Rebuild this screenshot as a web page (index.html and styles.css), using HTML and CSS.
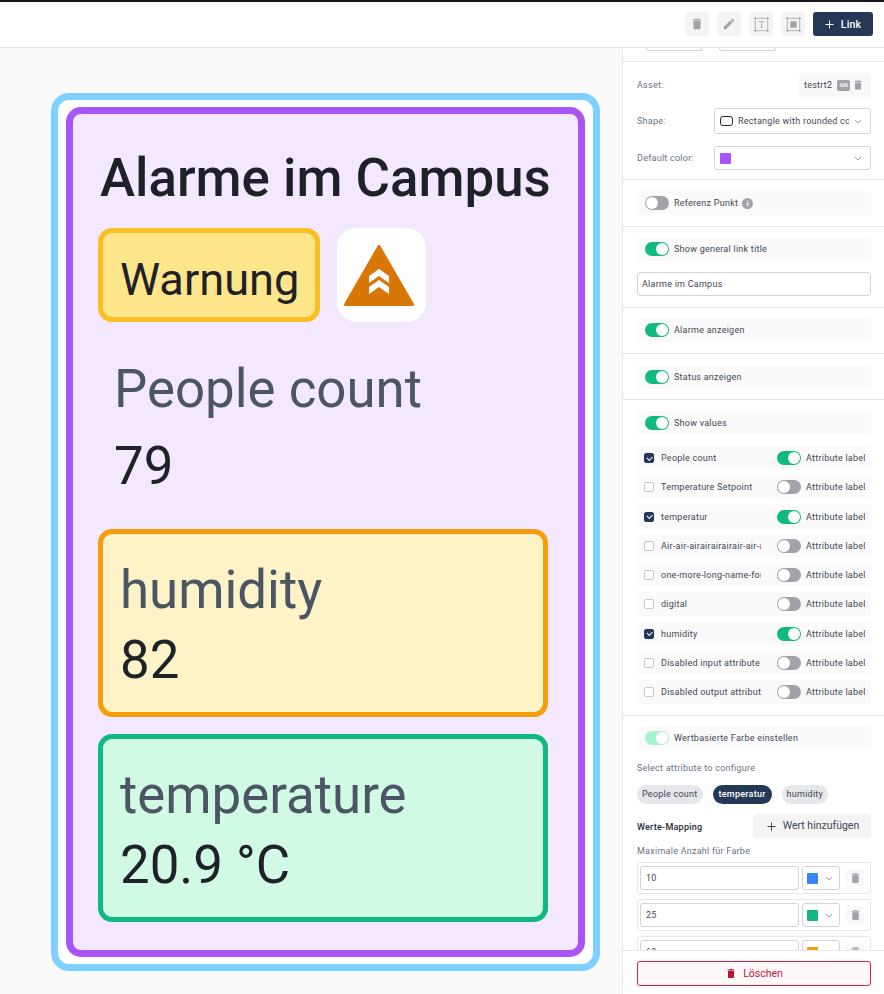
FILE: index.html
```html
<!DOCTYPE html>
<html lang="de">
<head>
<meta charset="utf-8">
<title>Link editor</title>
<link rel="stylesheet" href="styles.css">
</head>
<body>
<svg class="defs" width="0" height="0" aria-hidden="true">
  <symbol id="i-trash" viewBox="0 0 24 24"><path d="M6 19c0 1.1.9 2 2 2h8c1.1 0 2-.9 2-2V7H6v12zM19 4h-3.5l-1-1h-5l-1 1H5v2h14V4z"/></symbol>
  <symbol id="i-edit" viewBox="0 0 24 24"><path d="M3 17.25V21h3.75L17.81 9.94l-3.75-3.75L3 17.25zM20.71 7.04c.39-.39.39-1.02 0-1.41l-2.34-2.34c-.39-.39-1.02-.39-1.41 0l-1.83 1.83 3.75 3.75 1.83-1.83z"/></symbol>
  <symbol id="i-chev" viewBox="0 0 10 6"><path d="M1 1l4 4 4-4" fill="none" stroke="currentColor" stroke-width="1"/></symbol>
  <symbol id="i-plus" viewBox="0 0 10 10"><path d="M5 .5v9M.5 5h9" fill="none" stroke="currentColor" stroke-width="1.1"/></symbol>
</svg>
<div class="app">
  <header class="topbar">
    <button class="tool"><svg class="tool-ic"><use href="#i-trash"/></svg></button>
    <button class="tool"><svg class="tool-ic"><use href="#i-edit"/></svg></button>
    <button class="tool">
      <svg class="frame" viewBox="0 0 14 14"><rect x="1.2" y="1.2" width="11.6" height="11.6"/><circle cx="1.2" cy="1.2" r=".9"/><circle cx="12.8" cy="1.2" r=".9"/><circle cx="1.2" cy="12.8" r=".9"/><circle cx="12.8" cy="12.8" r=".9"/><path d="M4.3 4.3h5.4M7 4.3v5.4M5.8 9.7h2.4"/></svg>
    </button>
    <button class="tool">
      <svg class="frame" viewBox="0 0 14 14"><rect x="1.2" y="1.2" width="11.6" height="11.6"/><circle cx="1.2" cy="1.2" r=".9"/><circle cx="12.8" cy="1.2" r=".9"/><circle cx="1.2" cy="12.8" r=".9"/><circle cx="12.8" cy="12.8" r=".9"/><rect class="frame-fill" x="4" y="4" width="6" height="6"/></svg>
    </button>
    <button class="link-btn"><svg class="plus"><use href="#i-plus"/></svg><span>Link</span></button>
  </header>
  <div class="workspace">
    <main class="canvas">
      <div class="outer">
        <div class="inner">
          <h1 class="title">Alarme im Campus</h1>
          <div class="status-row">
            <div class="badge">Warnung</div>
            <div class="alarm-ic">
              <svg class="alarm-svg" viewBox="0 0 70 61">
                <path class="tri" d="M35 1.5 L68.5 59.5 H1.5 Z"/>
                <path class="chev" d="M25 31 L35 24 L45 31 V38 L35 31 L25 38 Z"/>
                <path class="chev" d="M25 42 L35 35 L45 42 V49 L35 42 L25 49 Z"/>
              </svg>
            </div>
          </div>
          <div class="plain">
            <div class="label">People count</div>
            <div class="value">79</div>
          </div>
          <div class="card card-amber">
            <div class="label">humidity</div>
            <div class="value">82</div>
          </div>
          <div class="card card-green">
            <div class="label">temperature</div>
            <div class="value">20.9 °C</div>
          </div>
        </div>
      </div>
    </main>
    <aside class="panel">
      <div class="panel-scroll">
        <section class="sec sec-stub"><span class="stub"></span><span class="stub"></span></section>
        <section class="sec sec-form">
          <div class="form-row form-asset">
            <span class="form-label">Asset:</span>
            <span class="asset"><span>testrt2</span><span class="asset-tag">GAI</span><svg class="asset-trash"><use href="#i-trash"/></svg></span>
          </div>
          <div class="form-row form-shape">
            <span class="form-label">Shape:</span>
            <span class="select select-shape"><i class="shape-ic"></i><span class="select-text">Rectangle with rounded corners</span><svg class="chev-ic"><use href="#i-chev"/></svg></span>
          </div>
          <div class="form-row form-color">
            <span class="form-label">Default color:</span>
            <span class="select select-color"><i class="swatch sw-purple"></i><svg class="chev-ic push"><use href="#i-chev"/></svg></span>
          </div>
        </section>
        <section class="sec sec-roomy">
          <div class="row"><i class="toggle"></i><span>Referenz Punkt</span><i class="info">i</i></div>
        </section>
        <section class="sec sec-tight">
          <div class="row"><i class="toggle on"></i><span>Show general link title</span></div>
          <div class="text-input">Alarme im Campus</div>
        </section>
        <section class="sec sec-tight">
          <div class="row"><i class="toggle on"></i><span>Alarme anzeigen</span></div>
        </section>
        <section class="sec">
          <div class="row"><i class="toggle on"></i><span>Status anzeigen</span></div>
        </section>
        <section class="sec sec-roomy">
          <div class="row"><i class="toggle on"></i><span>Show values</span></div>
          <div class="attrs">
            <div class="attr"><i class="check on"></i><span class="attr-name">People count</span><i class="toggle on"></i><span class="attr-label">Attribute label</span></div>
            <div class="attr"><i class="check"></i><span class="attr-name">Temperature Setpoint</span><i class="toggle"></i><span class="attr-label">Attribute label</span></div>
            <div class="attr"><i class="check on"></i><span class="attr-name">temperatur</span><i class="toggle on"></i><span class="attr-label">Attribute label</span></div>
            <div class="attr"><i class="check"></i><span class="attr-name">Air-air-airairairairair-air-air</span><i class="toggle"></i><span class="attr-label">Attribute label</span></div>
            <div class="attr"><i class="check"></i><span class="attr-name">one-more-long-name-for-test</span><i class="toggle"></i><span class="attr-label">Attribute label</span></div>
            <div class="attr"><i class="check"></i><span class="attr-name">digital</span><i class="toggle"></i><span class="attr-label">Attribute label</span></div>
            <div class="attr"><i class="check on"></i><span class="attr-name">humidity</span><i class="toggle on"></i><span class="attr-label">Attribute label</span></div>
            <div class="attr"><i class="check"></i><span class="attr-name">Disabled input attribute</span><i class="toggle"></i><span class="attr-label">Attribute label</span></div>
            <div class="attr"><i class="check"></i><span class="attr-name">Disabled output attribute</span><i class="toggle"></i><span class="attr-label">Attribute label</span></div>
          </div>
        </section>
        <section class="sec sec-last">
          <div class="row"><i class="toggle on soft"></i><span>Wertbasierte Farbe einstellen</span></div>
          <p class="hint">Select attribute to configure</p>
          <div class="chips">
            <span class="chip">People count</span>
            <span class="chip active">temperatur</span>
            <span class="chip">humidity</span>
          </div>
          <div class="map-head">
            <span class="map-title">Werte-Mapping</span>
            <button class="add-btn"><svg class="plus"><use href="#i-plus"/></svg><span class="add-text">Wert hinzufügen</span></button>
          </div>
          <p class="hint hint-max">Maximale Anzahl für Farbe</p>
          <div class="maps">
            <div class="map"><span class="map-input">10</span><span class="select map-select"><i class="swatch sw-blue"></i><svg class="chev-ic push"><use href="#i-chev"/></svg></span><span class="map-del"><svg class="map-trash"><use href="#i-trash"/></svg></span></div>
            <div class="map"><span class="map-input">25</span><span class="select map-select"><i class="swatch sw-green"></i><svg class="chev-ic push"><use href="#i-chev"/></svg></span><span class="map-del"><svg class="map-trash"><use href="#i-trash"/></svg></span></div>
            <div class="map"><span class="map-input">60</span><span class="select map-select"><i class="swatch sw-amber"></i><svg class="chev-ic push"><use href="#i-chev"/></svg></span><span class="map-del"><svg class="map-trash"><use href="#i-trash"/></svg></span></div>
          </div>
        </section>
      </div>
      <footer class="panel-foot">
        <button class="del-btn"><svg class="del-ic"><use href="#i-trash"/></svg><span>Löschen</span></button>
      </footer>
    </aside>
  </div>
</div>
</body>
</html>
```
FILE: styles.css
```css
* { box-sizing: border-box; }
html, body { margin: 0; height: 100%; }
body { font-family: Roboto, "Liberation Sans", sans-serif; color: #1f2937; background: #fff; overflow: hidden; }
.defs { position: absolute; }
button { font-family: inherit; border: 0; padding: 0; cursor: pointer; }
svg { display: block; fill: currentColor; }

.app { height: 994px; display: flex; flex-direction: column; border-top: 2px solid #15171c; }

/* top bar */
.topbar { height: 46px; flex: none; display: flex; align-items: center; justify-content: flex-end; gap: 8px; padding: 0 11px 1px 0; border-bottom: 1px solid #e5e7eb; background: #fff; }
.tool { width: 24px; height: 24px; border-radius: 3px; background: #f4f4f5; color: #a1a1aa; display: flex; align-items: center; justify-content: center; }
.tool-ic { width: 14px; height: 14px; }
.frame { width: 15px; height: 15px; fill: none; }
.frame rect, .frame path { stroke: #a7a9ae; stroke-width: .8; }
.frame circle { fill: #a1a1aa; }
.frame .frame-fill { fill: #a1a1aa; stroke: none; }
.link-btn { width: 60px; height: 24px; border-radius: 3px; background: #253858; color: #fff; font-size: 10.5px; font-weight: 500; display: flex; align-items: center; justify-content: center; gap: 7px; letter-spacing: .2px; }
.plus { width: 9px; height: 9px; }

.workspace { flex: 1; min-height: 0; display: flex; }

/* canvas */
.canvas { flex: 1; background: #fafafa; padding: 45px 0 0 51px; }
.outer { width: 549px; height: 878px; border: 7px solid #7dd0ff; border-radius: 18px; background: #fff; padding: 7px 8px; }
.inner { height: 850px; width: 519px; border: 7px solid #a855f7; border-radius: 15px; background: #f3e8ff; padding: 33px 0 0 25px; }
.title { margin: 0; padding-left: 2px; font-size: 52.8px; line-height: 62px; font-weight: 500; color: #1f2128; white-space: nowrap; }
.status-row { display: flex; gap: 17px; margin-top: 19px; }
.badge { width: 222px; height: 94px; border: 5px solid #fbbf24; border-radius: 14px; background: #fde68a; font-size: 45.2px; line-height: 94px; padding-left: 17px; color: #1f2128; }
.alarm-ic { width: 89px; height: 94px; border-radius: 20px; background: #fff; display: flex; align-items: center; justify-content: center; padding-right: 5px; }
.alarm-svg { width: 70px; height: 61px; }
.tri { fill: #d97706; stroke: #d97706; stroke-width: 3; stroke-linejoin: round; }
.chev { fill: #fff; }
.label { font-size: 52.8px; color: #4b5563; line-height: 70.4px; white-space: nowrap; }
.value { font-size: 52.8px; color: #1f2128; line-height: 70.4px; }
.plain { padding: 31.5px 0 0 16px; height: 206.8px; }
.plain .value { margin-top: 6.6px; }
.card { width: 450px; height: 188.6px; border: 5px solid; border-radius: 14px; padding: 21px 0 0 17px; }
.card + .card { margin-top: 16.4px; }
.card-amber { border-color: #f59e0b; background: #fef3c7; }
.card-green { border-color: #10b981; background: #d1fae5; }

/* panel */
.panel { width: 262px; flex: none; border-left: 1px solid #e5e7eb; background: #fff; display: flex; flex-direction: column; font-size: 9px; letter-spacing: .25px; color: #3f4653; }
.panel-scroll { flex: 1; min-height: 0; overflow: hidden; }
.sec { padding: 11px 13px 10px 14px; border-bottom: 1px solid #e5e7eb; display: flex; flex-direction: column; }
.sec-roomy { padding-bottom: 11px; }
.sec-tight { padding-top: 10px; padding-bottom: 11px; }
.sec-last { border-bottom: 0; padding-top: 10px; }
.sec-stub { height: 14px; padding: 0 0 0 23px; flex-direction: row; gap: 16px; align-items: flex-start; }
.stub { width: 57px; height: 3px; border: 1px solid #d4d4d8; border-top: 0; border-radius: 0 0 3px 3px; }

.sec-form { height: 118px; padding: 11px 13px 0 14px; }
.form-row { display: flex; align-items: center; justify-content: space-between; }
.form-label { color: #6b7280; }
.form-asset { height: 24px; }
.form-shape { height: 26px; margin-top: 11px; }
.form-color { height: 24px; margin-top: 12px; }
.asset { width: 72px; height: 24px; background: #f8f8f8; border-radius: 3px; display: flex; align-items: center; padding-left: 5px; }
.asset-tag { width: 13px; height: 11px; margin-left: 5px; border-radius: 2px; background: #a1a1aa; color: #fff; font-size: 5px; font-weight: 700; letter-spacing: 0; line-height: 11px; text-align: center; flex: none; }
.asset-trash { width: 12px; height: 14px; color: #a1a1aa; margin-left: 2px; flex: none; }
.select { width: 157px; border: 1px solid #d4d4d8; border-radius: 3px; background: #fff; display: flex; align-items: center; height: 100%; padding: 0 8px 0 5px; }
.shape-ic { width: 13px; height: 10px; border: 1px solid #1f2937; border-radius: 3px; flex: none; }
.select-text { margin-left: 5px; width: 111px; overflow: hidden; white-space: nowrap; flex: none; }
.chev-ic { width: 8px; height: 5px; color: #7b818c; flex: none; margin-left: 5px; }
.push { margin-left: auto; }
.swatch { width: 11px; height: 11px; border-radius: 1px; flex: none; display: block; }
.sw-purple { background: #a855f7; }
.sw-blue { background: #3b82f6; }
.sw-green { background: #10b981; }
.sw-amber { background: #f59e0b; }

.row { height: 24px; background: #fafafa; border-radius: 3px; display: flex; align-items: center; padding-left: 8px; }
.toggle { width: 24px; height: 14px; border-radius: 7px; background: #a1a3a9; position: relative; flex: none; margin-right: 5px; display: block; }
.toggle::after { content: ""; position: absolute; left: 1px; top: 1px; width: 12px; height: 12px; border-radius: 50%; background: #fff; }
.toggle.on { background: #10b981; }
.toggle.on::after { left: 11px; }
.toggle.soft { background: #a7f3d0; }
.info { width: 11px; height: 11px; border-radius: 50%; background: #a1a1aa; color: #fff; font-size: 8px; font-style: normal; font-weight: 700; line-height: 11px; text-align: center; margin-left: 4px; letter-spacing: 0; }
.text-input { height: 24px; margin-top: 11px; border: 1px solid #d4d4d8; border-radius: 3px; line-height: 22px; padding-left: 4px; }

.attrs { display: flex; flex-direction: column; gap: 5.25px; margin-top: 11px; }
.attr { height: 24px; background: #fafafa; border-radius: 3px; display: flex; align-items: center; padding-left: 7px; }
.check { width: 10px; height: 10px; border: 1px solid #c4c6cb; border-radius: 2px; background: #fff; flex: none; display: block; position: relative; }
.check.on { background: #253858; border-color: #253858; }
.check.on::after { content: ""; position: absolute; left: 2px; top: 1.5px; width: 4px; height: 2.5px; border-left: 1px solid #fff; border-bottom: 1px solid #fff; transform: rotate(-45deg); }
.attr-name { width: 100px; margin-left: 7px; margin-right: 16px; overflow: hidden; white-space: nowrap; flex: none; }
.attr-label { width: 59px; overflow: hidden; white-space: nowrap; flex: none; }

.hint { margin: 0; color: #6b7280; line-height: 12px; }
.sec-last .hint { margin-top: 12px; }
.chips { display: flex; gap: 10px; margin-top: 11px; }
.chip { height: 19px; line-height: 19px; border-radius: 10px; padding: 0 5px; background: #e5e7eb; }
.chip.active { background: #253858; color: #fff; font-weight: 500; padding: 0 6px; }
.map-head { display: flex; align-items: center; justify-content: space-between; margin-top: 10px; height: 24px; }
.map-title { font-weight: 500; color: #1f2937; padding-top: 2px; }
.add-btn { width: 118px; height: 24px; border-radius: 3px; background: #f4f4f5; color: #3f4653; font-size: 10.5px; display: flex; align-items: center; justify-content: center; gap: 7px; padding-left: 2px; }
.add-text { padding-bottom: 2px; }
.sec-last .hint-max { margin-top: 7px; }
.maps { display: flex; flex-direction: column; gap: 5px; margin-top: 5px; }
.map { height: 32px; border: 1px solid #e5e7eb; border-radius: 3px; background: #fff; display: flex; align-items: center; padding-left: 2px; flex: none; }
.map-input { width: 159px; height: 24px; border: 1px solid #d4d4d8; border-radius: 3px; line-height: 22px; padding-left: 5px; flex: none; }
.map-select { width: 38px; height: 24px; margin-left: 3px; padding: 0 6px 0 4px; flex: none; }
.map-del { width: 18px; height: 18px; margin-left: 6px; background: #f8f8f8; border-radius: 3px; display: flex; align-items: center; justify-content: center; color: #a1a1aa; }
.map-trash { width: 13px; height: 14px; }

.panel-foot { height: 44px; flex: none; border-top: 1px solid #e5e7eb; padding: 10px 13px 0 14px; background: #fff; }
.del-btn { width: 234px; height: 25px; border: 1px solid #e11d48; border-radius: 3px; background: #fff8f9; color: #be123c; font-size: 10.5px; display: flex; align-items: center; justify-content: center; gap: 6px; }
.del-ic { width: 12px; height: 13px; }
```
